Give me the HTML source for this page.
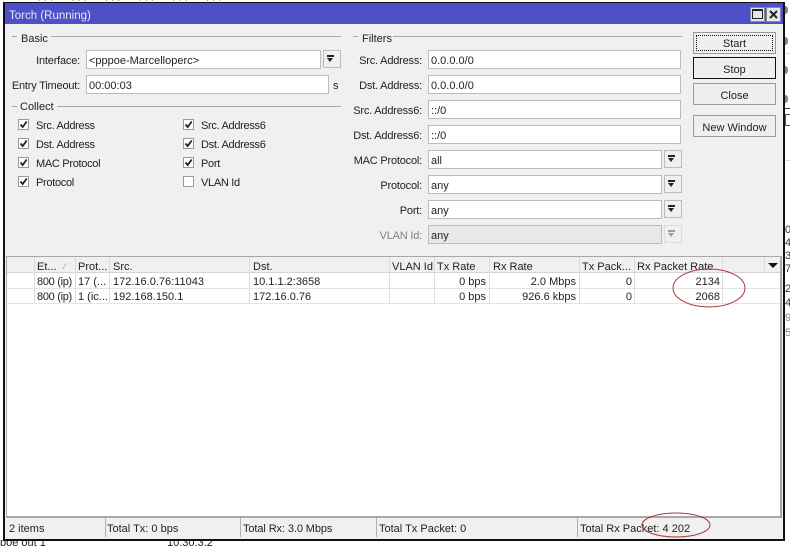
<!DOCTYPE html>
<html><head><meta charset="utf-8"><style>
html,body{margin:0;padding:0;background:#fff}
#p{position:relative;width:790px;height:546px;overflow:hidden;background:#fff;font:11px/16px "Liberation Sans",sans-serif;color:#222}
#p div{position:absolute;box-sizing:border-box;white-space:nowrap}
.l{text-align:right;height:16px;letter-spacing:-.2px}
.i{background:#fff;border:1px solid #bcbcbc;height:19px;padding:2px 0 0 2px}
.d{background:#f0f0f0;border:1px solid #bcbcbc;width:18px;height:18px}
.d:before{content:"";position:absolute;left:3px;top:4px;width:7px;height:2px;background:#222}
.d:after{content:"";position:absolute;left:3px;top:7px;width:0;height:0;border-left:3.5px solid transparent;border-right:3.5px solid transparent;border-top:4px solid #222}
.c{width:11px;height:11px;background:#fff;border:1px solid #9a9a9a}
.c svg{display:block}
.t{letter-spacing:-.3px}
.g{height:1px;background:#a8a8a8}
.b{background:#efefef;border:1px solid #9a9a9a;text-align:center;width:83px;height:22px;line-height:22px}
.v{width:1px;background:#dcdcdc}
.r{text-align:right}
.m{left:785px;width:3px;height:8px;background:#888;border-radius:0 3px 3px 0}
</style></head><body><div id="p">
<!-- background bleed -->
<div style="left:38px;top:-13px;color:#333">pppoe pppoe pppoe pppoe pppoe pppoe</div>
<div style="left:0;top:535px;color:#222">poe out 1</div>
<div style="left:167px;top:535px;color:#222">10.30.3.2</div>
<div class="m" style="top:6px"></div>
<div class="m" style="top:37px"></div>
<div class="m" style="top:66px"></div>
<div class="m" style="top:95px"></div>
<div style="left:785px;top:53px;width:5px;height:1px;background:#ddd"></div>
<div style="left:785px;top:108px;width:5px;height:1px;background:#333"></div>
<div style="left:785px;top:114px;width:5px;height:12px;border:1px solid #555;border-right:0"></div>
<div style="left:785px;top:160px;width:5px;height:1px;background:#ddd"></div>
<div style="left:785px;top:222px;color:#333">0</div>
<div style="left:785px;top:235px;color:#333">4</div>
<div style="left:785px;top:248px;color:#333">3</div>
<div style="left:785px;top:261px;color:#333">7</div>
<div style="left:785px;top:281px;color:#333">2</div>
<div style="left:785px;top:295px;color:#333">4</div>
<div style="left:785px;top:310px;color:#888">9</div>
<div style="left:785px;top:325px;color:#888">5</div>
<!-- window -->
<div style="left:3px;top:2px;width:782px;height:539px;background:#f0f0f0;border:1px solid #111;border-width:1px 2px 2px 2px"></div>
<div style="left:5px;top:3px;width:778px;height:21px;background:#4d50c6"></div>
<div style="left:9px;top:8px;color:#e8e8f8;font-size:11.5px">Torch (Running)</div>
<div style="left:750px;top:7px;width:15px;height:15px;background:#e6e6ea;border:1px solid #8888a0"></div>
<div style="left:752px;top:9px;width:11px;height:10px;border:1px solid #222;border-top-width:2px"></div>
<div style="left:766px;top:7px;width:15px;height:15px;background:#e6e6ea;border:1px solid #8888a0"></div>
<svg style="position:absolute;left:769px;top:10px" width="10" height="10"><path d="M1 1L8 8M8 1L1 8" stroke="#222" stroke-width="2"/></svg>
<!-- Basic -->
<div class="g" style="left:12px;top:36px;width:5px"></div>
<div style="left:21px;top:31px">Basic</div>
<div class="g" style="left:51px;top:36px;width:290px"></div>
<div class="l" style="left:10px;top:53px;width:70px">Interface:</div>
<div class="i" style="left:86px;top:50px;width:235px">&lt;pppoe-Marcelloperc&gt;</div>
<div class="d" style="left:323px;top:50px"></div>
<div class="l" style="left:5px;top:78px;width:75px">Entry Timeout:</div>
<div class="i" style="left:86px;top:75px;width:243px">00:00:03</div>
<div style="left:333px;top:78px">s</div>
<!-- Collect -->
<div class="g" style="left:12px;top:106px;width:5px"></div>
<div style="left:20px;top:99px">Collect</div>
<div class="g" style="left:57px;top:106px;width:284px"></div>
<div class="c" style="left:18px;top:119px"><svg width="9" height="9"><path d="M1.5 4.5L3.7 7L7.7 1.5" fill="none" stroke="#222" stroke-width="1.8"/></svg></div><div class="t" style="left:36px;top:118px">Src. Address</div>
<div class="c" style="left:18px;top:138px"><svg width="9" height="9"><path d="M1.5 4.5L3.7 7L7.7 1.5" fill="none" stroke="#222" stroke-width="1.8"/></svg></div><div class="t" style="left:36px;top:137px">Dst. Address</div>
<div class="c" style="left:18px;top:157px"><svg width="9" height="9"><path d="M1.5 4.5L3.7 7L7.7 1.5" fill="none" stroke="#222" stroke-width="1.8"/></svg></div><div class="t" style="left:36px;top:156px">MAC Protocol</div>
<div class="c" style="left:18px;top:176px"><svg width="9" height="9"><path d="M1.5 4.5L3.7 7L7.7 1.5" fill="none" stroke="#222" stroke-width="1.8"/></svg></div><div class="t" style="left:36px;top:175px">Protocol</div>
<div class="c" style="left:183px;top:119px"><svg width="9" height="9"><path d="M1.5 4.5L3.7 7L7.7 1.5" fill="none" stroke="#222" stroke-width="1.8"/></svg></div><div class="t" style="left:201px;top:118px">Src. Address6</div>
<div class="c" style="left:183px;top:138px"><svg width="9" height="9"><path d="M1.5 4.5L3.7 7L7.7 1.5" fill="none" stroke="#222" stroke-width="1.8"/></svg></div><div class="t" style="left:201px;top:137px">Dst. Address6</div>
<div class="c" style="left:183px;top:157px"><svg width="9" height="9"><path d="M1.5 4.5L3.7 7L7.7 1.5" fill="none" stroke="#222" stroke-width="1.8"/></svg></div><div class="t" style="left:201px;top:156px">Port</div>
<div class="c" style="left:183px;top:176px"></div><div class="t" style="left:201px;top:175px">VLAN Id</div>
<!-- Filters -->
<div class="g" style="left:353px;top:36px;width:5px"></div>
<div style="left:362px;top:31px">Filters</div>
<div class="g" style="left:393px;top:36px;width:289px"></div>
<div class="l" style="left:340px;top:53px;width:82px">Src. Address:</div>
<div class="i" style="left:428px;top:50px;width:253px">0.0.0.0/0</div>
<div class="l" style="left:340px;top:78px;width:82px">Dst. Address:</div>
<div class="i" style="left:428px;top:75px;width:253px">0.0.0.0/0</div>
<div class="l" style="left:340px;top:103px;width:82px">Src. Address6:</div>
<div class="i" style="left:428px;top:100px;width:253px">::/0</div>
<div class="l" style="left:340px;top:128px;width:82px">Dst. Address6:</div>
<div class="i" style="left:428px;top:125px;width:253px">::/0</div>
<div class="l" style="left:340px;top:153px;width:82px">MAC Protocol:</div>
<div class="i" style="left:428px;top:150px;width:234px">all</div><div class="d" style="left:664px;top:150px"></div>
<div class="l" style="left:340px;top:178px;width:82px">Protocol:</div>
<div class="i" style="left:428px;top:175px;width:234px">any</div><div class="d" style="left:664px;top:175px"></div>
<div class="l" style="left:340px;top:203px;width:82px">Port:</div>
<div class="i" style="left:428px;top:200px;width:234px">any</div><div class="d" style="left:664px;top:200px"></div>
<div class="l" style="left:340px;top:228px;width:82px;color:#808080">VLAN Id:</div>
<div class="i" style="left:428px;top:225px;width:234px;background:#e8e8e8">any</div>
<div class="d" style="left:664px;top:225px;opacity:.4"></div>
<!-- Buttons -->
<div class="b" style="left:693px;top:32px"><div style="left:2px;top:2px;width:77px;height:16px;border:1px dotted #111"></div>Start</div>
<div class="b" style="left:693px;top:57px;border-color:#111;line-height:24px">Stop</div>
<div class="b" style="left:693px;top:83px;line-height:24px">Close</div>
<div class="b" style="left:693px;top:115px;line-height:24px">New Window</div>
<!-- Table -->
<div style="left:6px;top:256px;width:776px;height:262px;background:#fff;border:1px solid #a8a8a8;border-width:1px 2px 2px 1px"></div>
<div style="left:7px;top:257px;width:773px;height:16px;background:#f0f0f0;border-bottom:1px solid #d4d4d4"></div>
<div style="left:7px;top:288px;width:773px;height:1px;background:#e4e4e4"></div>
<div style="left:7px;top:303px;width:773px;height:1px;background:#e4e4e4"></div>
<div class="v" style="left:34px;top:257px;height:46px"></div>
<div class="v" style="left:75px;top:257px;height:46px"></div>
<div class="v" style="left:109px;top:257px;height:46px"></div>
<div class="v" style="left:249px;top:257px;height:46px"></div>
<div class="v" style="left:389px;top:257px;height:46px"></div>
<div class="v" style="left:434px;top:257px;height:46px"></div>
<div class="v" style="left:489px;top:257px;height:46px"></div>
<div class="v" style="left:579px;top:257px;height:46px"></div>
<div class="v" style="left:634px;top:257px;height:46px"></div>
<div class="v" style="left:722px;top:257px;height:46px"></div>
<div class="v" style="left:764px;top:257px;height:16px"></div>
<div style="left:37px;top:259px">Et...</div>
<div style="left:64px;top:259px;font-size:8px;color:#888">∕</div>
<div style="left:78px;top:259px">Prot...</div>
<div style="left:113px;top:259px">Src.</div>
<div style="left:253px;top:259px">Dst.</div>
<div style="left:392px;top:259px">VLAN Id</div>
<div style="left:437px;top:259px">Tx Rate</div>
<div style="left:493px;top:259px">Rx Rate</div>
<div style="left:582px;top:259px">Tx Pack...</div>
<div style="left:637px;top:259px">Rx Packet Rate</div>
<div style="left:768px;top:263px;width:0;height:0;border-left:5px solid transparent;border-right:5px solid transparent;border-top:5px solid #111"></div>
<div class="t" style="left:37px;top:274px">800 (ip)</div><div style="left:78px;top:274px">17 (...</div><div style="left:113px;top:274px">172.16.0.76:11043</div><div style="left:253px;top:274px">10.1.1.2:3658</div>
<div class="r" style="left:434px;top:274px;width:52px">0 bps</div><div class="r" style="left:490px;top:274px;width:86px">2.0 Mbps</div><div class="r" style="left:580px;top:274px;width:52px">0</div><div class="r" style="left:635px;top:274px;width:85px">2134</div>
<div class="t" style="left:37px;top:289px">800 (ip)</div><div style="left:78px;top:289px">1 (ic...</div><div style="left:113px;top:289px">192.168.150.1</div><div style="left:253px;top:289px">172.16.0.76</div>
<div class="r" style="left:434px;top:289px;width:52px">0 bps</div><div class="r" style="left:490px;top:289px;width:86px">926.6 kbps</div><div class="r" style="left:580px;top:289px;width:52px">0</div><div class="r" style="left:635px;top:289px;width:85px">2068</div>
<!-- Status -->
<div class="v" style="left:105px;top:518px;height:19px;background:#b0b0b0"></div>
<div class="v" style="left:240px;top:518px;height:19px;background:#b0b0b0"></div>
<div class="v" style="left:376px;top:518px;height:19px;background:#b0b0b0"></div>
<div class="v" style="left:577px;top:518px;height:19px;background:#b0b0b0"></div>
<div style="left:9px;top:521px">2 items</div>
<div style="left:107px;top:521px">Total Tx: 0 bps</div>
<div style="left:243px;top:521px;letter-spacing:-.1px">Total Rx: 3.0 Mbps</div>
<div style="left:379px;top:521px">Total Tx Packet: 0</div>
<div style="left:580px;top:521px">Total Rx Packet: 4 202</div>
<!-- Ellipses -->
<svg style="position:absolute;left:0;top:0" width="790" height="546" fill="none" stroke="#a83a3e" stroke-width="1"><ellipse cx="709" cy="288" rx="36" ry="19"/><ellipse cx="676" cy="525" rx="34" ry="12"/></svg>
</div></body></html>
